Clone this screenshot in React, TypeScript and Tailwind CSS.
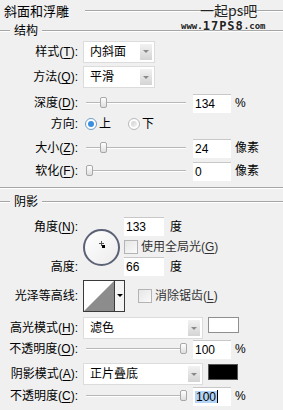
import React from "react";

const font = "font-['Liberation_Sans','Noto_Sans_CJK_SC',sans-serif]";

function Label({ text, k, after = "):" }: { text: string; k?: string; after?: string }) {
  return (
    <span className="w-[78px] shrink-0 text-right leading-none">
      {text}
      {k ? (
        <>
          (<span className="underline underline-offset-2">{k}</span>
          {after}
        </>
      ) : (
        after
      )}
    </span>
  );
}

function Etched({ className = "" }: { className?: string }) {
  return <div className={`h-[2px] border-t border-[#a6a6a6] border-b border-b-white ${className}`} />;
}

function Legend({ text }: { text: string }) {
  return (
    <div className="flex items-center h-[18px]">
      <Etched className="w-[10px]" />
      <span className="px-[4px] leading-none">{text}</span>
      <Etched className="flex-1" />
    </div>
  );
}

function Dropdown({ value, width }: { value: string; width: string }) {
  return (
    <div className={`${width} h-[22px] ml-[5px] flex bg-white border border-[#dcdcdc]`}>
      <span className="flex-1 pl-[6px] flex items-center leading-none">{value}</span>
      <div className="w-[12px] my-[2px] mr-[2px] bg-gradient-to-b from-[#f2f2f2] to-[#d4d4d4] flex items-center justify-center">
        <div className="w-0 h-0 border-l-[3px] border-r-[3px] border-t-[3px] border-l-transparent border-r-transparent border-t-[#8a8a8a]" />
      </div>
    </div>
  );
}

function Slider({ pos }: { pos: number }) {
  return (
    <div className="relative w-[100px] h-[12px] ml-[8px] shrink-0">
      <div className="absolute left-0 right-0 top-[5px] h-[2px] bg-[#b8b8b8] border-b border-b-white" />
      <div
        className="absolute top-0 w-[7px] h-[11px] rounded-[2px] border border-[#a8a8a8] bg-gradient-to-b from-white to-[#dedede]"
        style={{ left: pos }}
      />
    </div>
  );
}

function NumBox({ value, width = "w-[38px]", selected = false }: { value: string; width?: string; selected?: boolean }) {
  return (
    <div className={`${width} h-[19px] bg-white border-t border-[#c8c8c8] flex items-center pl-[2px] leading-none`}>
      {selected ? (
        <>
          <span className="bg-[#b3d4f5] px-[1px]">{value}</span>
          <span className="w-[1px] h-[13px] bg-black" />
        </>
      ) : (
        value
      )}
    </div>
  );
}

function SliderRow({ label, k, value, pos, unit, top }: { label: string; k: string; value: string; pos: number; unit: string; top: string }) {
  return (
    <div className={`flex items-center h-[20px] ${top}`}>
      <Label text={label} k={k} />
      <Slider pos={pos} />
      <div className="ml-[7px]">
        <NumBox value={value} />
      </div>
      <span className="ml-[4px] leading-none">{unit}</span>
    </div>
  );
}

function Check({ label, k }: { label: string; k: string }) {
  return (
    <div className="flex items-center gap-[3px]">
      <div className="w-[14px] h-[14px] border border-[#b4b4b4] bg-gradient-to-br from-[#e6e6e6] to-[#fafafa]" />
      <span className="leading-none text-[#333]">
        {label}(<span className="underline underline-offset-2">{k}</span>)
      </span>
    </div>
  );
}

export default function App() {
  return (
    <div className={`relative w-[283px] h-[410px] overflow-hidden bg-[#f0f0f0] text-[12px] text-black ${font}`}>
      {/* title */}
      <div className="flex items-center h-[22px] pl-[4px]">
        <span className="leading-none text-[13px]">斜面和浮雕</span>
        <Etched className="flex-1 ml-[16px]" />
      </div>

      <Legend text="结构" />

      <div className="flex items-center h-[23px]">
        <Label text="样式" k="T" />
        <Dropdown value="内斜面" width="w-[72px]" />
      </div>
      <div className="flex items-center h-[22px] mt-[3px]">
        <Label text="方法" k="Q" />
        <Dropdown value="平滑" width="w-[72px]" />
      </div>

      <SliderRow label="深度" k="D" value="134" pos={14} unit="%" top="mt-[5px]" />

      <div className="flex items-center h-[20px] mt-px">
        <Label text="方向" after=":" />
        <div className="ml-[7px] w-[12px] h-[12px] rounded-full border border-[#6f9bc4] bg-white flex items-center justify-center">
          <div className="w-[6px] h-[6px] rounded-full bg-[#3c8ede]" />
        </div>
        <span className="ml-[2px] leading-none">上</span>
        <div className="ml-[17px] w-[12px] h-[12px] rounded-full border border-[#b8b8b8] bg-white flex items-center justify-center">
          <div className="w-[6px] h-[6px] rounded-full bg-gradient-to-br from-[#d0d0d0] to-[#f4f4f4]" />
        </div>
        <span className="ml-[2px] leading-none">下</span>
      </div>

      <SliderRow label="大小" k="Z" value="24" pos={14} unit="像素" top="mt-[4px]" />
      <SliderRow label="软化" k="F" value="0" pos={0} unit="像素" top="mt-[3px]" />

      <Etched className="mt-[6px]" />

      <div className="mt-[4px]">
        <Legend text="阴影" />
      </div>

      {/* angle block */}
      <div className="flex mt-[6px] h-[59px]">
        <div className="w-[78px] flex flex-col justify-between pt-[4px] pb-[3px]">
          <Label text="角度" k="N" />
          <Label text="高度" after=":" />
        </div>
        <div className="w-[46px] flex items-center justify-center pt-[2px]">
          <div className="relative w-[37px] h-[37px] rounded-full border-2 border-[#5c6276] bg-gradient-to-br from-white to-[#ececec]">
            <div className="absolute left-[14px] top-[12px] w-[5px] h-px bg-[#555]" />
            <div className="absolute left-[16px] top-[10px] w-px h-[5px] bg-[#555]" />
            <div className="absolute left-[17px] top-[14px] w-[3px] h-[3px] bg-black" />
          </div>
        </div>
        <div className="flex flex-col">
          <div className="flex items-center">
            <NumBox value="133" width="w-[40px]" />
            <span className="ml-[6px] leading-none">度</span>
          </div>
          <div className="mt-[3px] h-[16px] flex items-center">
            <Check label="使用全局光" k="G" />
          </div>
          <div className="flex items-center mt-[2px]">
            <NumBox value="66" width="w-[40px]" />
            <span className="ml-[6px] leading-none">度</span>
          </div>
        </div>
      </div>

      {/* gloss contour */}
      <div className="flex items-center h-[33px] mt-[3px]">
        <Label text="光泽等高线" after=":" />
        <div className="ml-[5px] w-[42px] h-[32px] flex border border-[#3a3a3a] bg-white">
          <svg width="30" height="30" viewBox="0 0 30 30" className="shrink-0">
            <polygon points="0,30 30,0 30,30" fill="#8c8c8c" />
          </svg>
          <div className="flex-1 border-l border-[#3a3a3a] bg-[#f4f4f4] flex items-center justify-center">
            <div className="w-0 h-0 border-l-[3px] border-r-[3px] border-t-[3px] border-l-transparent border-r-transparent border-t-black" />
          </div>
        </div>
        <div className="ml-[13px]">
          <Check label="消除锯齿" k="L" />
        </div>
      </div>

      <div className="flex items-center h-[22px] mt-[5px]">
        <Label text="高光模式" k="H" />
        <Dropdown value="滤色" width="w-[120px]" />
        <div className="ml-[5px] self-start w-[31px] h-[16px] bg-white border border-[#8f8f8f]" />
      </div>

      <div className="flex items-center h-[20px]">
        <Label text="不透明度" k="O" />
        <Slider pos={94} />
        <div className="ml-[7px]">
          <NumBox value="100" />
        </div>
        <span className="ml-[4px] leading-none">%</span>
      </div>

      <div className="flex items-center h-[22px] mt-[4px]">
        <Label text="阴影模式" k="A" />
        <Dropdown value="正片叠底" width="w-[120px]" />
        <div className="ml-[5px] self-start mt-px w-[30px] h-[16px] bg-black border border-[#555]" />
      </div>

      <div className="flex items-center h-[20px] mt-px">
        <Label text="不透明度" k="C" />
        <Slider pos={94} />
        <div className="ml-[7px]">
          <NumBox value="100" selected />
        </div>
        <span className="ml-[4px] leading-none">%</span>
      </div>

      {/* watermark */}
      <div className="absolute left-[200px] top-[3px] text-[14px] leading-[14px] text-[#222] font-['Noto_Sans_CJK_SC',sans-serif] [text-shadow:0_0_2px_white]">
        一起ps吧
      </div>
      <div className="absolute left-[181px] top-[21px] h-[11px] leading-[11px] font-bold text-[#222] font-['DejaVu_Sans_Mono',monospace] [text-shadow:0_0_2px_white] flex items-end">
        <span className="text-[9px]">www.</span>
        <span className="text-[12px] tracking-[1px]">17PS8</span>
        <span className="text-[9px]">.com</span>
      </div>
    </div>
  );
}
